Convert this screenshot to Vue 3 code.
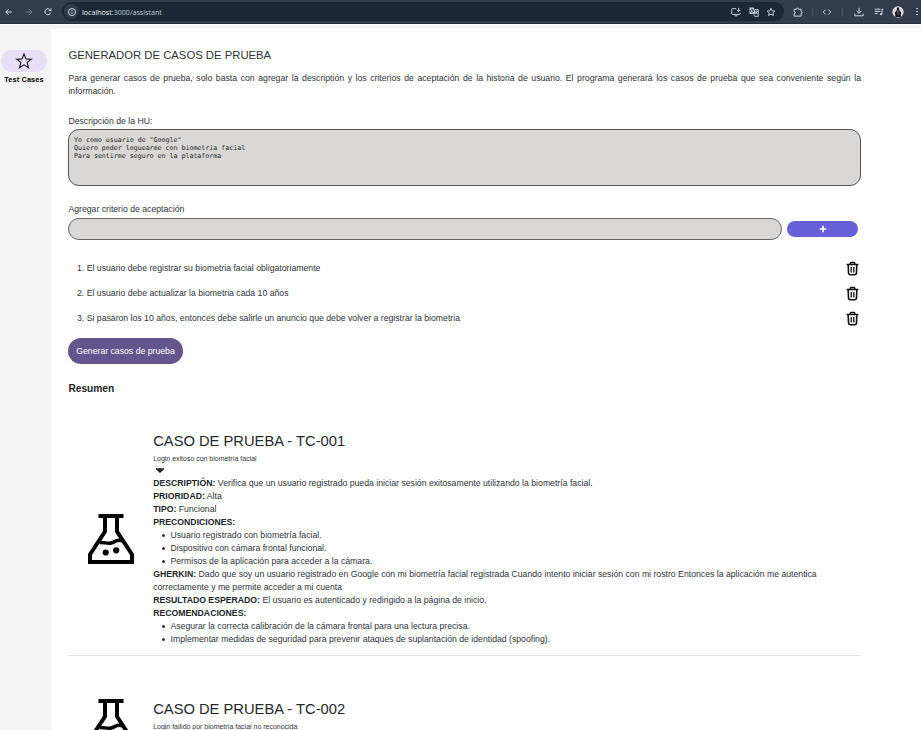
<script setup>
const criteria = [
  'El usuario debe registrar su biometria facial obligatoriamente',
  'El usuario debe actualizar la biometria cada 10 años',
  'Si pasaron los 10 años, entonces debe salirle un anuncio que debe volver a registrar la biometria',
]
const story = 'Yo como usuario de "Google"\nQuiero poder loguearme con biometria facial\nPara sentirme seguro en la plataforma'
const cases = [
  {
    id: 'TC-001',
    summary: 'Login exitoso con biometría facial',
    description: 'Verifica que un usuario registrado pueda iniciar sesión exitosamente utilizando la biometría facial.',
    priority: 'Alta',
    type: 'Funcional',
    preconditions: [
      'Usuario registrado con biometría facial.',
      'Dispositivo con cámara frontal funcional.',
      'Permisos de la aplicación para acceder a la cámara.',
    ],
    gherkin: 'Dado que soy un usuario registrado en Google con mi biometría facial registrada Cuando intento iniciar sesión con mi rostro Entonces la aplicación me autentica correctamente y me permite acceder a mi cuenta',
    expected: 'El usuario es autenticado y redirigido a la página de inicio.',
    recommendations: [
      'Asegurar la correcta calibración de la cámara frontal para una lectura precisa.',
      'Implementar medidas de seguridad para prevenir ataques de suplantación de identidad (spoofing).',
    ],
    open: true,
  },
  { id: 'TC-002', summary: 'Login fallido por biometría facial no reconocida', open: false },
]
</script>

<template>
  <div class="window">
    <header class="browser">
      <nav class="nav-icons">
        <svg viewBox="0 0 10 10"><path d="M8.1 5H1.8M4.6 2.200 1.800 5l2.800 2.800" /></svg>
        <svg class="dim" viewBox="0 0 10 10"><path d="M1.4 5h6.500M5.100 2.200l2.800 2.800-2.800 2.800" /></svg>
        <svg viewBox="0 0 10 10"><path d="M7.500 3.200A3 3 0 1 0 7.800 5.600M7.900 1.500v2.200H5.700" /></svg>
      </nav>
      <div class="address">
        <span class="info">
          <svg viewBox="0 0 10 10"><circle cx="5" cy="5" r="3.5" /><path d="M5 4.7v2M5 3v.9" /></svg>
        </span>
        <span class="url">localhost<i>:3000/assistant</i></span>
        <div class="address-actions">
          <svg viewBox="0 0 10 10"><path d="M5.2 1.6H1.4Q.8 1.6.8 2.2v4.6q0 .6.6.6h7.2q.6 0 .6-.6V6M3.4 8.800h3.200M7.600.8v3.600M6 3l1.600 1.600L9.200 3" /></svg>
          <svg viewBox="0 0 10 10"><path class="solid" d="M.5.5h4.300l2 6.500H1.100Q.5 7 .5 6.400Z" /><path class="cut" d="M3 3.700h1.500A1.500 1.500 0 1 1 4 2.600" /><path d="M5.800 2.500h3.500v6.800H5.500L4.800 7.400M6.300 4.300h2.400M7.500 3.600v.7M8.300 4.300 6.600 7M6.700 5l1.800 2" /></svg>
          <svg viewBox="0 0 10 10"><path d="m5 1.300 1.100 2.500 2.700.3-2 1.800.6 2.700L5 7.200 2.600 8.600l.6-2.700-2-1.800 2.700-.3Z" /></svg>
        </div>
      </div>
      <div class="tools">
        <svg class="puzzle" viewBox="0 0 10 10"><path d="M1.200 2.200h2.300a1 1 0 0 1 2 0h2.600v2.300a1 1 0 0 1 0 2v2.600H1.200V6.600a1 1 0 0 0 0-2Z" /></svg>
        <span class="divider"></span>
        <svg class="code" viewBox="0 0 10 10"><path d="M3.600 2.600 1.200 5l2.400 2.400M6.400 2.600 8.800 5 6.400 7.400" /></svg>
        <span class="divider"></span>
        <svg class="download" viewBox="0 0 10 10"><path d="M5 .8v5.400M2.600 4 5 6.400 7.400 4M.8 6.700v2.100h8.400V6.700" /></svg>
        <svg class="media" viewBox="0 0 10 10"><path d="M.8 2.200h5.600M.8 4.400h5.600M.8 6.600h2.800M9.400 2.200H8v5" /><circle class="solid" cx="6.900" cy="7.200" r="1.100" /></svg>
        <svg class="avatar" viewBox="0 0 12 12"><circle cx="6" cy="6" r="5.700" fill="#d8d8d8" /><path d="M3.300 11 3 6.200 4.800 4.300 5 1.500h2l.3 2.800L9 6.300 8.800 11Z" fill="#171a1e" /><path d="M5.700 4.500h.6L6.200 9h-.4Z" fill="#ddd" /></svg>
        <span class="more"><b></b><b></b><b></b></span>
      </div>
    </header>

    <div class="body">
      <aside class="sidebar">
        <div class="pill">
          <svg viewBox="0 0 24 24"><path d="m12 2.500 2.600 6.700 7.100.4-5.500 4.500 1.800 6.900-6-3.900L6 21l1.800-6.900-5.500-4.500 7.100-.4Z" /></svg>
        </div>
        <span>Test Cases</span>
      </aside>

      <main class="main">
        <h1>GENERADOR DE CASOS DE PRUEBA</h1>
        <p class="intro">Para generar casos de prueba, solo basta con agregar la descriptión y los criterios de aceptación de la historia de usuario. El programa generará los casos de prueba que sea conveniente según la información.</p>

        <label class="label">Descripción de la HU:</label>
        <div class="story">{{ story }}</div>

        <label class="label second">Agregar criterio de aceptación</label>
        <div class="add-row">
          <div class="input"></div>
          <button class="plus"><svg viewBox="0 0 8 8"><path d="M4 .7v6.600M.7 4h6.600" /></svg></button>
        </div>

        <ol class="criteria">
          <li v-for="(item, i) in criteria" :key="i">
            <span>{{ i + 1 }}. {{ item }}</span>
            <svg viewBox="0 0 13 15"><path d="M.6 3.500h11.800M3.900 3.300 4.700 1.500h3.600l.8 1.800M2.200 3.500l.3 8.300q.1 2 2 2h4q1.900 0 2-2l.3-8.300" /><path class="thin" d="M5.200 5.900v5.600M7.800 5.900v5.600" /></svg>
          </li>
        </ol>

        <button class="generate">Generar casos de prueba</button>
        <h2>Resumen</h2>

        <article v-for="c in cases" :key="c.id" class="case" :class="{ collapsed: !c.open }">
          <svg class="flask" viewBox="0 0 46 50">
            <path d="M10.500 2h25M17 2v15.500L2 40.500V48h42v-7.500L29 17.500V2" />
            <path class="wave" d="M11.500 28.500c5-.5 7.500 1.500 11.500.5 4.500-1.200 6-4 11.500-2.200" />
            <circle cx="17.700" cy="38.500" r="3.100" /><circle cx="28.200" cy="36.300" r="3.100" />
          </svg>
          <div class="details">
            <h3>CASO DE PRUEBA - {{ c.id }}</h3>
            <p class="summary">{{ c.summary }}</p>
            <div class="toggle"><svg viewBox="0 0 8 5"><path d="M.1.300h7.800v1L4.800 4.500q-.8.600-1.600 0L.1 1.300Z" /></svg></div>
            <template v-if="c.open">
              <p><b>DESCRIPTIÓN:</b> {{ c.description }}</p>
              <p><b>PRIORIDAD:</b> {{ c.priority }}</p>
              <p><b>TIPO:</b> {{ c.type }}</p>
              <p><b>PRECONDICIONES:</b></p>
              <ul><li v-for="x in c.preconditions" :key="x">{{ x }}</li></ul>
              <p><b>GHERKIN:</b> {{ c.gherkin }}</p>
              <p><b>RESULTADO ESPERADO:</b> {{ c.expected }}</p>
              <p><b>RECOMENDACIONES:</b></p>
              <ul><li v-for="x in c.recommendations" :key="x">{{ x }}</li></ul>
            </template>
          </div>
        </article>
      </main>
    </div>
  </div>
</template>

<style>
html, body { margin: 0; height: 730px; overflow: hidden; background: #fff; }
</style>

<style scoped>
.window { width: 921px; height: 730px; overflow: hidden; display: flex; flex-direction: column; font: 8.700px/13px "Liberation Sans", Arial, sans-serif; color: #2f3337; }
.window * { box-sizing: border-box; }
h1, h2, h3, p, ul, ol { margin: 0; padding: 0; font-weight: 400; }
button { border: 0; padding: 0; font: inherit; color: #fff; }
svg { display: block; flex: none; }

.browser { height: 24px; flex: none; display: flex; align-items: center; background: #323c4c; border-bottom: 1px solid #252e3b; }
.browser svg { width: 10px; height: 10px; fill: none; stroke: #d3dae3; stroke-width: 1; }
.browser .solid { fill: #c3cad3; stroke: none; }
.browser .cut { stroke: #1b2735; stroke-width: .8; }
.nav-icons { display: flex; gap: 9.500px; padding-left: 4px; width: 62px; }
.browser .dim { opacity: .4; }
.address { width: 722px; height: 19px; border-radius: 10px; background: #1b2735; display: flex; align-items: center; padding: 0 8px 0 2px; }
.info { width: 15px; height: 15px; border-radius: 50%; background: #303b49; display: grid; place-items: center; }
.url { margin-left: 3px; font: 7.120px/10px "Open Sans", "Noto Sans", sans-serif; color: #eef2f5; flex: 1; }
.url i { font-style: normal; color: #bfc8d1; }
.address-actions { display: flex; gap: 7.500px; }
.browser .address-actions svg { stroke-width: .9; }
.tools { display: flex; align-items: center; flex: 1; padding-left: 9px; }
.divider { width: 1px; height: 8px; background: #4b5666; }
.puzzle + .divider { margin: 0 9px 0 9px; }
.code + .divider { margin: 0 11px 0 10px; }
.media { margin-left: 10px; }
.browser .avatar { width: 12px; height: 12px; margin-left: 8px; stroke: none; }
.more { display: flex; flex-direction: column; gap: 1.600px; margin-left: 12px; }
.more b { width: 1.600px; height: 1.600px; border-radius: 50%; background: #ccd4dd; }

.body { flex: 1; display: flex; min-height: 0; margin-top: 1px; background: #f4f4f4; }
.sidebar { width: 51px; flex: none; display: flex; flex-direction: column; align-items: center; padding: 25px 3px 0 0; }
.pill { width: 46px; height: 22px; border-radius: 11px; background: #e8def8; display: grid; place-items: center; }
.pill svg { width: 18px; height: 18px; fill: none; stroke: #1d1b20; stroke-width: 1.500; }
.sidebar span { font-size: 7.300px; line-height: 10px; font-weight: 700; letter-spacing: .15px; color: #000; margin-top: 3px; white-space: nowrap; }

.main { flex: 1; min-width: 0; margin-top: 4px; background: #fff; padding: 19px 60px 0 17px; display: flex; flex-direction: column; align-items: flex-start; }
.main > * { flex: none; }
h1 { font-size: 11.300px; line-height: 15px; padding-left: .4px; }
.intro { margin-top: 9px; text-align: justify; width: 793px; padding-left: .4px; }
.label { margin-top: 17px; padding-left: .4px; }
.story { width: 793px; height: 57px; margin-top: 1px; border: 1px solid #555; border-radius: 11px; background: #d9d8d7; padding: 6px 5px; font: 6.620px/8px "DejaVu Sans Mono", monospace; color: #222; white-space: pre; }
.label.second { margin-top: 17px; }
.add-row { display: flex; align-items: center; gap: 5px; margin-top: 2px; }
.input { width: 714px; height: 22px; border: 1px solid #666; border-radius: 11px; background: #d9d8d7; }
.plus { width: 71px; height: 16px; border-radius: 8px; background: #6860d8; display: grid; place-items: center; }
.plus svg { width: 8px; height: 8px; fill: none; stroke: #fff; stroke-width: 1.700; }
.criteria { list-style: none; width: 793px; margin-top: 16px; padding: 0 2px 0 9px; }
.criteria li { height: 25px; display: flex; align-items: center; justify-content: space-between; }
.criteria svg { width: 13px; height: 15px; fill: none; stroke: #111; stroke-width: 1.600; stroke-linejoin: round; }
.criteria .thin { stroke-width: 1.300; }
.generate { width: 115px; height: 26px; border-radius: 13px; background: #65558f; margin-top: 7px; }
h2 { font-size: 10.200px; line-height: 14px; font-weight: 700; margin-top: 18px; padding-left: .4px; color: #222; }

.case { width: 793px; display: flex; align-items: center; gap: 19px; padding: 43px 0 9px 20px; border-bottom: 1px solid #e2e3e4; }
h2 + .case { padding-top: 35px; }
.flask { width: 46px; height: 50px; fill: none; stroke: #000; stroke-width: 4; }
.flask circle { fill: #000; stroke: none; }
.flask .wave { stroke-width: 3.500; }
.details { flex: 1; width: 0; padding: 0 20px 0 .2px; }
.collapsed .details { padding-bottom: 4px; }
h3 { font-size: 14.730px; line-height: 20px; color: #24282c; }
.summary { font-size: 6.970px; line-height: 11px; margin-top: 2px; }
.toggle { height: 13px; padding: 4px 0 0 3px; }
.toggle svg { width: 8px; height: 5px; fill: #212529; }
.details b { color: #212529; }
.details ul { list-style: none; padding-left: 8.500px; }
.details li { display: flex; align-items: center; gap: 5.800px; }
.details li::before { content: ""; width: 3px; height: 3px; border-radius: 50%; background: #2f3337; }
</style>
